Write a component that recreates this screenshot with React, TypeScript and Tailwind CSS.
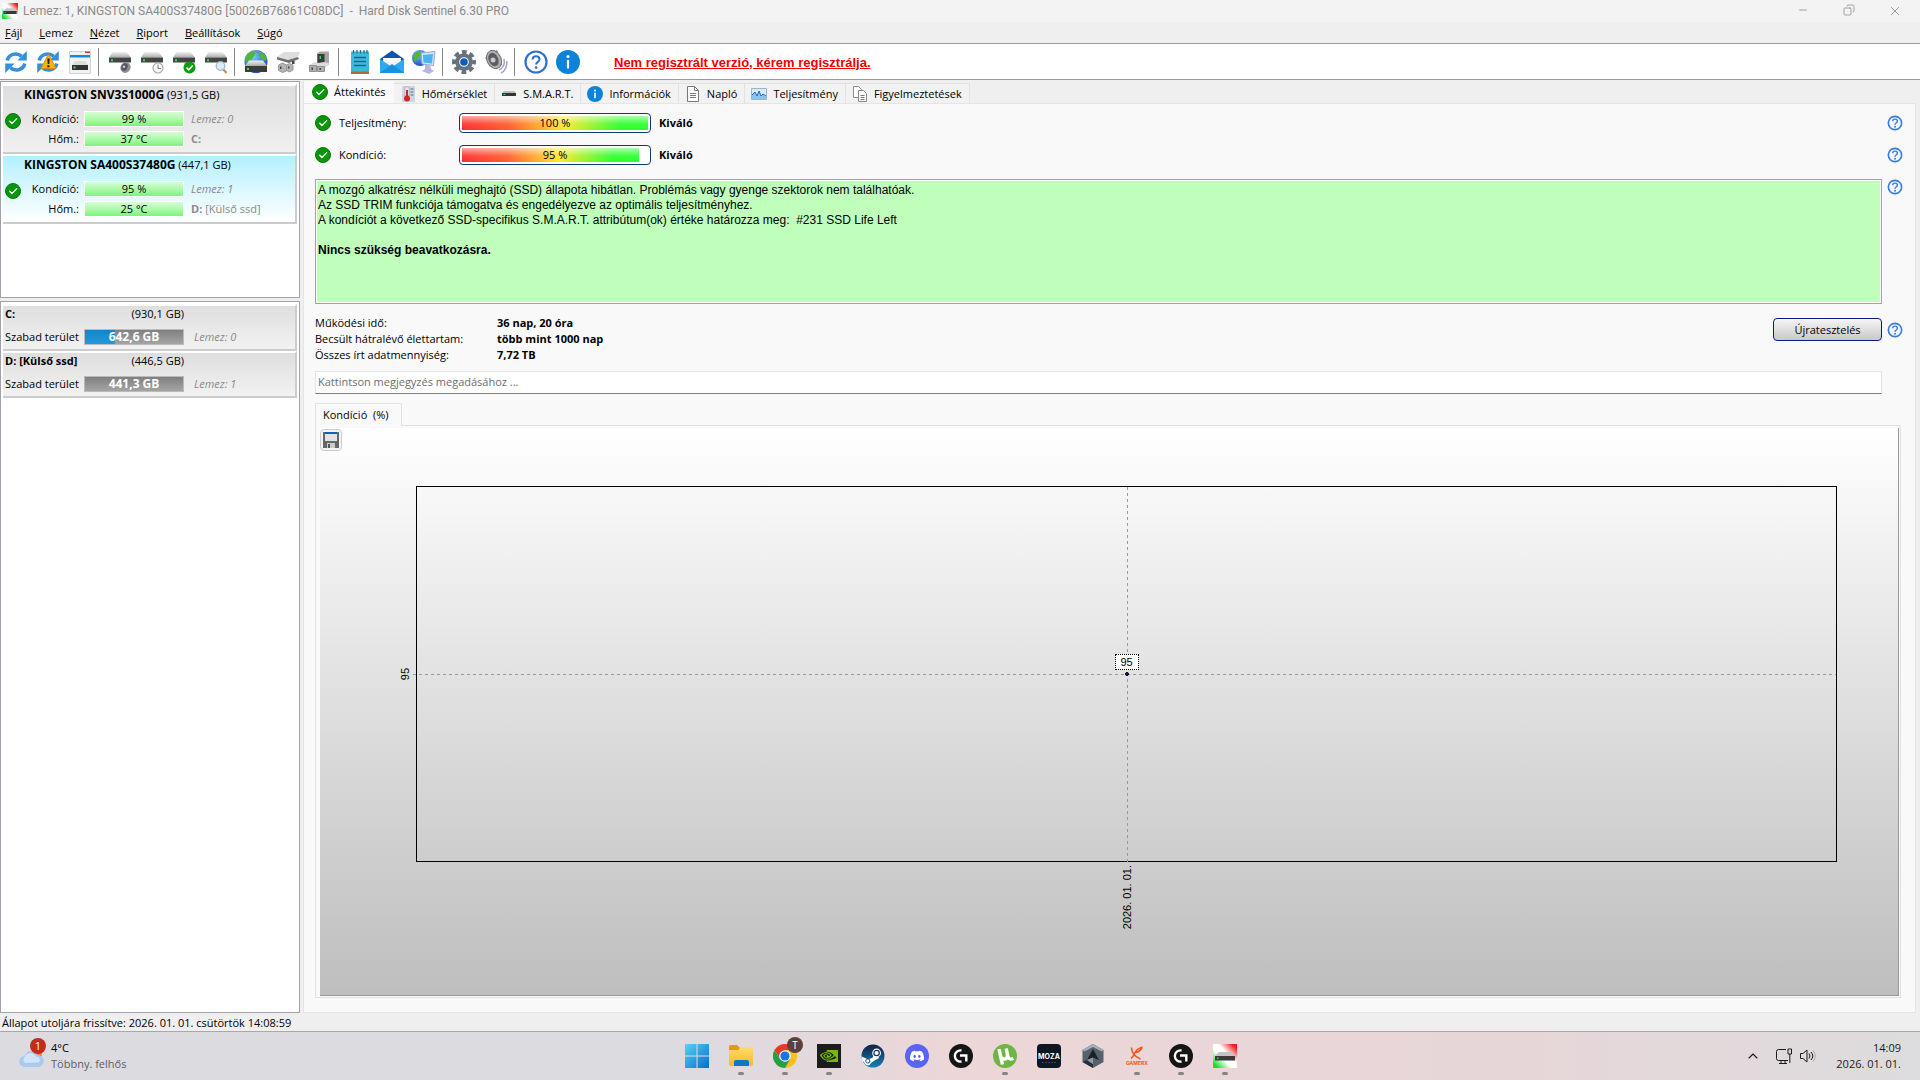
import type { ReactNode } from "react";
import { Check, ChevronUp, Copy, Minus, X } from "lucide-react";
import { SiDiscord, SiNvidia } from "react-icons/si";

type IconProps = { className?: string };

function OkIcon({ className = "size-4" }: IconProps) {
  return (
    <span className={`${className} shrink-0 rounded-full bg-[#0a960a] border border-[#077a07] flex items-center justify-center`}>
      <Check className="size-3/4 text-white" strokeWidth={3} />
    </span>
  );
}

function HelpIcon({ className = "size-4" }: IconProps) {
  return (
    <svg className={`${className} shrink-0`} viewBox="0 0 24 24" fill="none">
      <circle cx="12" cy="12" r="10" fill="#eef5fd" stroke="#3a7bd5" strokeWidth="2.4" />
      <path d="M8.6 9.400c0-4.400 6.900-4.200 6.900-.2 0 2.700-3.400 2.700-3.400 5.300" stroke="#3a7bd5" strokeWidth="2.1" />
      <circle cx="12.1" cy="17.600" r="1.400" fill="#3a7bd5" />
    </svg>
  );
}

function InfoIcon({ className = "size-4" }: IconProps) {
  return (
    <svg className={`${className} shrink-0`} viewBox="0 0 24 24">
      <circle cx="12" cy="12" r="12" fill="#0c82d8" />
      <circle cx="12" cy="6.600" r="1.500" fill="#fff" />
      <path d="M10.800 10h2.400v8.400h-2.400z" fill="#fff" />
    </svg>
  );
}

function Defs() {
  return (
    <svg width="0" height="0" className="absolute">
      <defs>
        <linearGradient id="metal" x1="0" y1="0" x2="0" y2="1">
          <stop offset="0" stopColor="#f2f2f2" />
          <stop offset="1" stopColor="#aaa" />
        </linearGradient>
        <linearGradient id="logo" x1="0" y1="1" x2="1" y2="0">
          <stop offset="0.1" stopColor="#12e02a" />
          <stop offset="0.4" stopColor="#fff" />
          <stop offset="0.6" stopColor="#fff" />
          <stop offset="0.9" stopColor="#f21c1c" />
        </linearGradient>
        <radialGradient id="globe" cx="0.4" cy="0.3" r="0.8">
          <stop offset="0" stopColor="#7fc4ff" />
          <stop offset="1" stopColor="#0b3fae" />
        </radialGradient>
        <linearGradient id="win" x1="0" y1="0" x2="1" y2="1">
          <stop offset="0" stopColor="#5ad0f8" />
          <stop offset="1" stopColor="#0270c8" />
        </linearGradient>
        <linearGradient id="steam" x1="0" y1="0" x2="0" y2="1">
          <stop offset="0" stopColor="#121f42" />
          <stop offset="1" stopColor="#1482b8" />
        </linearGradient>
        <linearGradient id="folder" x1="0" y1="0" x2="0" y2="1">
          <stop offset="0" stopColor="#ffdc6b" />
          <stop offset="1" stopColor="#f8b82a" />
        </linearGradient>
      </defs>
    </svg>
  );
}

function SentinelLogo({ className = "size-4" }: IconProps) {
  return (
    <svg className={className} viewBox="0 0 24 24">
      <path fill="url(#logo)" d="M0 0h24v24H0z" />
      <path fill="#c4c4c4" d="M6 8h12l4 4H2z" />
      <path fill="#3a3a3a" d="M2 12h20v4.500H2z" />
      <path fill="#24e04a" d="M4 13.500h1.500V15H4z" />
    </svg>
  );
}

function Refresh() {
  return (
    <g fill="none" stroke="#3390dc" strokeWidth="3.600">
      <path d="M3.200 10.500C4.600 4.500 12.500 1.600 17.600 6.400" />
      <path d="M20.800 13.500c-1.400 6-9.300 8.900-14.400 4.100" />
      <path fill="#3390dc" stroke="none" d="M22.800 1v9.600h-9.400zM1.200 23v-9.600h9.400z" />
    </g>
  );
}

function Drive() {
  return (
    <g>
      <path fill="url(#metal)" d="M4.500 2h14L23 7.500H1z" />
      <path fill="#444" d="M1 7.500h22v5H1z" />
      <path fill="#2ee04a" d="M3 9.200h2v2H3z" />
    </g>
  );
}

const toolbar: { label: string; art: ReactNode }[][] = [
  [
    { label: "Frissítés", art: <Refresh /> },
    {
      label: "Teljes frissítés",
      art: (
        <>
          <Refresh />
          <path fill="#fbb413" stroke="#e08d00" d="M12.500 4 20 18.500H5z" strokeLinejoin="round" />
          <path fill="#222" d="M11.300 8.500h2.400l-.4 5.500h-1.600zM11.300 15.200h2.200v2h-2.200z" />
        </>
      ),
    },
    {
      label: "Lemez panel",
      art: (
        <>
          <path fill="#f2f2f2" stroke="#d2d2d2" d="M1.500 1.500h21v22h-21z" />
          <path fill="#1a86e0" d="M2 5h20v2.500H2z" />
          <path fill="#e03a2a" d="M17 1.500h5v1.500h-5z" />
          <path fill="#ddd" d="M7 11h10l3 4H4z" />
          <path fill="#333" d="M4 15h16v5H4z" />
          <path fill="#2ee04a" d="M5.500 16.500h2v2h-2z" />
        </>
      ),
    },
  ],
  [
    {
      label: "Hangjelzés",
      art: (
        <>
          <Drive />
          <ellipse cx="17.500" cy="17.500" rx="5" ry="5.500" fill="#8c8c94" transform="rotate(25 17.500 17.500)" />
          <ellipse cx="16.500" cy="17" rx="3" ry="3.800" fill="#55555d" transform="rotate(25 16.500 17)" />
          <circle cx="16" cy="16.800" r="1.300" fill="#c8c8d0" />
        </>
      ),
    },
    {
      label: "Ütemezés",
      art: (
        <>
          <Drive />
          <circle cx="18" cy="18" r="5" fill="#fafafa" stroke="#aaa" strokeWidth="1.200" />
          <path d="M18 14.500V18.500h3" fill="none" stroke="#777" />
        </>
      ),
    },
    {
      label: "Teszt",
      art: (
        <>
          <Drive />
          <circle cx="17.500" cy="17.500" r="6" fill="#0d9c0d" />
          <path d="m14.500 17.500 2.200 2.300 4-4.300" fill="none" stroke="#fff" strokeWidth="1.600" />
        </>
      ),
    },
    {
      label: "Keresés",
      art: (
        <>
          <Drive />
          <path d="m19 19 3.500 4" stroke="#c08a5a" strokeWidth="2" />
          <circle cx="16.500" cy="16" r="4.300" fill="#d8ecfa" stroke="#9ab8d2" strokeWidth="1.200" />
        </>
      ),
    },
  ],
  [
    {
      label: "Hálózat",
      art: (
        <>
          <circle cx="12" cy="11.500" r="11.500" fill="url(#globe)" />
          <path fill="#4fb83a" d="M4 4c4-4 8-3 7 0s-2 3-4 6-5 2-6 0 1-4 3-6zM15 2c4 0 7 4 8 7-2 3-5 1-6-1s-4-3-2-6z" />
          <path fill="url(#metal)" d="M5 10.500h14l4 5.500H1z" />
          <path fill="#3c3c3c" d="M1 16h22v6H1z" />
          <path fill="#2ee04a" d="M3 18h2v2H3z" />
        </>
      ),
    },
    {
      label: "Kiadás",
      art: (
        <>
          <path fill="#dcdcdc" d="M8 2h16l-2 5-10 3L1 7z" />
          <path fill="#6f6f6f" d="m1 7 11 3 10-3 1 2-10 4L1 9.500z" />
          <path fill="#b4b4b4" stroke="#999" d="m2.500 15 4-2 4 2v6l-4 1.500-4-2zM10.500 15l3-1.500 3.500 1.500v5l-3.500 2-3-1.500z" />
          <path fill="#444" d="M4 16.500h1.500v2.500H4zM12 16.500h1.500v2H12zM16 11h2.500v3H16z" />
        </>
      ),
    },
    {
      label: "Csatlakoztatás",
      art: (
        <>
          <path fill="#a6a6a6" d="m9 3.500 3-2h9v13l-4 2H9z" />
          <path fill="#3a3a3a" d="M9.500 4h7v9h-7z" />
          <path fill="#2ee04a" d="M11.500 6H13v3h-1.500z" />
          <path fill="#dcdcdc" d="m1 15 6-3 3 1 6-1 6 1.500-5 4.500H1z" />
          <path fill="#b0b0b0" stroke="#8e8e8e" d="M1.500 15.500h7v6h-7zM9.500 16.500h7v5h-7z" />
          <path fill="#444" d="M3.500 17.500H5V20H3.500zM11.500 18H13v2h-1.500z" />
        </>
      ),
    },
  ],
  [
    {
      label: "Riport",
      art: (
        <>
          <path fill="#b8682a" d="M3 21h18v3H3z" />
          <path fill="#3db9dc" d="M3 1.500h18v20H3z" />
          <path d="M6 7.500h12M6 11.500h12M6 15.500h12" stroke="#146a8a" strokeWidth="1.400" />
          <path d="M5.500 0v3.500M9 0v3.500M12.500 0v3.500M16 0v3.500M19 0v3.500" stroke="#17708e" strokeWidth="1.200" />
        </>
      ),
    },
    {
      label: "E-mail",
      art: (
        <>
          <path fill="#0a58a6" d="M12 .5 24 9v14H0V9z" />
          <path fill="#f4f8fc" d="M3 8h18v8H3z" />
          <path fill="#2daaf0" d="m0 9 12 8 12-8v14H0z" />
          <path fill="#1990e0" d="m0 23 12-9 12 9z" />
        </>
      ),
    },
    {
      label: "Weboldal",
      art: (
        <>
          <circle cx="8" cy="8" r="8" fill="url(#globe)" />
          <path fill="#4fb83a" d="M3 3c4-3 7-1 6 2S5 8 4 11 0 8 3 3z" />
          <path fill="#d7e3f7" stroke="#93a8cf" d="m9 3 14-1.500-1.500 14L10 14z" />
          <path fill="#46b4ef" d="m11 5 10-1-1 9.500-8.500-1z" />
          <path fill="#b9b5e0" d="M13 15h5l1 4 3 2-5 3-7-3 3-2z" />
        </>
      ),
    },
  ],
  [
    {
      label: "Beállítások",
      art: (
        <>
          <circle cx="12" cy="12" r="9.800" fill="none" stroke="#66727c" strokeWidth="4.400" strokeDasharray="4.600 3.097" strokeDashoffset="2.300" />
          <circle cx="12" cy="12" r="6.800" fill="#fff" stroke="#66727c" strokeWidth="4" />
          <circle cx="12" cy="12" r="3.800" fill="#0a5fb4" />
        </>
      ),
    },
    {
      label: "Hangok",
      art: (
        <>
          <path fill="#77777c" d="M1 8 13 0l5 15-7 4z" />
          <ellipse cx="10" cy="9.500" rx="7" ry="9.500" fill="#b2b2b4" stroke="#6e6e72" transform="rotate(-25 10 9.500)" />
          <ellipse cx="9.500" cy="9.500" rx="4.800" ry="7" fill="#5c5c60" transform="rotate(-25 9.500 9.500)" />
          <circle cx="9" cy="10" r="2.500" fill="#c9c9cc" />
          <path d="M20 9c1 5-1 9-5 11M23 11c0 6-2 10-6 12" fill="none" stroke="#a4a0cc" strokeWidth="1.500" />
        </>
      ),
    },
  ],
  [
    {
      label: "Súgó",
      art: (
        <>
          <circle cx="12" cy="12" r="10.500" fill="#fff" stroke="#2f6fd0" strokeWidth="2.200" />
          <path d="M8.600 9.400c0-4.400 6.900-4.200 6.900-.2 0 2.700-3.400 2.700-3.400 5.300" fill="none" stroke="#2f6fd0" strokeWidth="2" />
          <circle cx="12.100" cy="17.600" r="1.400" fill="#2f6fd0" />
        </>
      ),
    },
    {
      label: "Névjegy",
      art: (
        <>
          <circle cx="12" cy="12" r="12" fill="#0c82d8" />
          <circle cx="12" cy="6.600" r="1.500" fill="#fff" />
          <path d="M10.900 10h2.200v8.500h-2.200z" fill="#fff" />
        </>
      ),
    },
  ],
];

const menu = ["Fájl", "Lemez", "Nézet", "Riport", "Beállítások", "Súgó"];

const disks = [
  { name: "KINGSTON SNV3S1000G", size: "(931,5 GB)", health: "99 %", temp: "37 °C", no: "Lemez: 0", letter: "C:", volume: "", active: false },
  { name: "KINGSTON SA400S37480G", size: "(447,1 GB)", health: "95 %", temp: "25 °C", no: "Lemez: 1", letter: "D:", volume: "[Külső ssd]", active: true },
];

const partitions = [
  { name: "C:", size: "(930,1 GB)", free: "642,6 GB", used: 31, no: "Lemez: 0" },
  { name: "D: [Külső ssd]", size: "(446,5 GB)", free: "441,3 GB", used: 0, no: "Lemez: 1" },
];

const tabs: { label: string; icon: ReactNode }[] = [
  {
    label: "Hőmérséklet",
    icon: (
      <svg className="size-4" viewBox="0 0 16 16">
        <path fill="#c9d6e4" d="M2 0h13v16H2z" />
        <path fill="#f6f6f6" stroke="#999" strokeWidth=".6" d="M5 1h4v9H5z" />
        <path fill="#d92020" d="M6 4h2v7H6z" />
        <circle cx="7" cy="12.500" r="3" fill="#d92020" />
        <path stroke="#667" d="M10.500 3h3M10.500 6h3M10.500 9h3" />
      </svg>
    ),
  },
  {
    label: "S.M.A.R.T.",
    icon: (
      <svg className="size-4" viewBox="0 0 16 16">
        <path fill="#bbb" d="M3 5h10l2 2H1z" />
        <path fill="#333" d="M1 7h14v3H1z" />
        <path fill="#2ee04a" d="M2.500 8h2v1h-2z" />
      </svg>
    ),
  },
  { label: "Információk", icon: <InfoIcon /> },
  {
    label: "Napló",
    icon: (
      <svg className="size-4" viewBox="0 0 16 16" fill="#fff" stroke="#777">
        <path d="M2.500.5h7l4 4v11h-11z" />
        <path d="M9.500.5v4h4M5 7.500h6M5 9.500h6M5 11.500h6" fill="none" />
      </svg>
    ),
  },
  {
    label: "Teljesítmény",
    icon: (
      <svg className="size-4" viewBox="0 0 16 16">
        <path fill="#d8ebf9" stroke="#9ab4c8" d="M.5 2.500h15v11H.5z" />
        <path fill="#8cc4f0" d="m1 9 3-3 2 4 2-5 2 5 2-2 3 2v3H1z" />
        <path fill="none" stroke="#1b6fc0" d="m1 9 3-3 2 4 2-5 2 5 2-2 3 2" />
      </svg>
    ),
  },
  {
    label: "Figyelmeztetések",
    icon: (
      <svg className="size-4" viewBox="0 0 16 16" fill="#fff" stroke="#8a8a8a">
        <path d="M1.500.5h5l3 3v8h-8z" />
        <path d="M6.500 4.500h5l3 3v8h-8z" />
        <path d="M8.500 9.500h4M8.500 11.500h4M8.500 13.500h4" stroke="#3f86cf" />
      </svg>
    ),
  },
];

const taskbar: { label: string; running?: boolean; art: ReactNode }[] = [
  {
    label: "Start",
    art: <path fill="url(#win)" d="M0 0h11.500v11.500H0zM12.500 0H24v11.500H12.500zM0 12.500h11.500V24H0zM12.500 12.500H24V24H12.500z" />,
  },
  {
    label: "Fájlkezelő",
    running: true,
    art: (
      <>
        <path fill="#e09a10" d="M0 3a2 2 0 0 1 2-2h6l3 3v4H0z" />
        <path fill="url(#folder)" d="M0 6h9l3-3h10a2 2 0 0 1 2 2v15a2 2 0 0 1-2 2H2a2 2 0 0 1-2-2z" />
        <path fill="#1574c4" d="M5 22v-4a2 2 0 0 1 2-2h11a2 2 0 0 1 2 2v4z" />
      </>
    ),
  },
  {
    label: "Chrome",
    running: true,
    art: (
      <>
        <circle cx="12" cy="12" r="12" fill="#fbc116" />
        <path fill="#e33b2e" d="M1.600 6A12 12 0 0 1 22.400 6H12L7 15z" />
        <path fill="#24a148" d="M1.600 6A12 12 0 0 0 12 24l5.200-9H6.800z" />
        <circle cx="12" cy="12" r="5.800" fill="#fff" />
        <circle cx="12" cy="12" r="4.600" fill="#1a73e8" />
      </>
    ),
  },
  { label: "NVIDIA", running: true, art: <><path fill="#1c1c1c" d="M0 0h24v24H0z" /><SiNvidia x="3" y="3" size={18} color="#76b900" /></> },
  {
    label: "Steam",
    art: (
      <>
        <circle cx="12" cy="12" r="11.500" fill="url(#steam)" />
        <path fill="#fff" d="m.6 12.500 6.400 2.700 4.300-1.200 2-4 5 4-4.800 2.500-3.500 2.500a3.500 3.500 0 0 1-6.600-.3L.8 16z" />
        <circle cx="15.600" cy="9" r="4.400" fill="#fff" />
        <circle cx="15.600" cy="9" r="2.700" fill="#fff" stroke="#17305c" strokeWidth="1.200" />
        <circle cx="6.800" cy="17" r="2.100" fill="none" stroke="#17507c" />
      </>
    ),
  },
  { label: "Discord", art: <><circle cx="12" cy="12" r="12" fill="#5865f2" /><SiDiscord x="5" y="5" size={14} color="#fff" /></> },
  { label: "G HUB", art: <GHub /> },
  {
    label: "µTorrent",
    running: true,
    art: (
      <>
        <circle cx="12" cy="12" r="12" fill="#6fb544" />
        <path d="m6 5 3.400 15.500M7.300 11c.8 5 7.200 6 7.200 0L13.200 4.500M14.500 11c.5 3.500 2.500 5 6 3.500" fill="none" stroke="#fff" strokeWidth="3.400" />
      </>
    ),
  },
  {
    label: "MOZA",
    art: (
      <>
        <rect width="24" height="24" rx="4" fill="#0d1724" />
        <text x="12" y="14.500" fill="#fff" fontSize="7" fontWeight="700" textAnchor="middle" fontFamily="Inter, sans-serif">MOZA</text>
        <path d="M5 18.500h14" stroke="#345" strokeDasharray="2 1" />
      </>
    ),
  },
  {
    label: "Armoury",
    art: (
      <>
        <path fill="#56616b" d="m12 0 10.500 6v12L12 24 1.500 18V6z" />
        <path fill="#a3adb5" d="m12 0 10.500 6-2 1.500L12 3 3.500 7.500 1.500 6z" />
        <path fill="#27303a" d="m1.500 18 4-2 6.500 4v4z" />
        <path fill="#1a2028" d="m12 5 6 11-6-2.500L6 16z" />
        <path fill="#8f9aa3" d="m6 16 6-2.500V20z" />
      </>
    ),
  },
  {
    label: "Gamerx",
    running: true,
    art: (
      <>
        <path d="M6.500 3.500c0 5 3 9 9 11.500M17.500 3c-5 1.500-7 4-8 6.500s-2 4-3.500 5M10 8.500c3 0 5-1.500 7-4.500" fill="none" stroke="#f0591e" strokeWidth="1.600" />
        <text x="12" y="21" fill="#f0591e" fontSize="5" fontWeight="700" textAnchor="middle" fontFamily="Inter, sans-serif">GAMERX</text>
      </>
    ),
  },
  { label: "G HUB 2", running: true, art: <GHub /> },
  { label: "Hard Disk Sentinel", running: true, art: <SentinelLogo className="" /> },
];

function GHub() {
  return (
    <>
      <circle cx="12" cy="12" r="12" fill="#151515" />
      <path d="M12.500 6.500A5.600 5.600 0 1 0 12.500 17.500M11 11.500h6.300v6" fill="none" stroke="#fff" strokeWidth="2.400" />
    </>
  );
}

function GreenBar({ text }: { text: string }) {
  return (
    <div className="h-4 w-25 border border-white bg-linear-to-b from-[#d8fdd6] to-[#7cf47c] flex items-center justify-center">
      {text}
    </div>
  );
}

function Meter({ label, value }: { label: string; value: number }) {
  return (
    <div className="flex items-center h-8">
      <OkIcon />
      <span className="ml-2 w-30">{label}</span>
      <div className="relative w-48 h-5 rounded-sm border border-[#0b3a75] bg-white p-0.5">
        <div
          className="h-full bg-[linear-gradient(to_bottom,rgba(255,255,255,.6),rgba(255,255,255,.1)_55%,rgba(255,255,255,0)),linear-gradient(to_right,#ff2a2a,#ff5a2a_25%,#ffe82a_55%,#2aff2a_85%)]"
          style={{ width: `${value}%` }}
        />
        <span className="absolute inset-0 flex items-center justify-center">{value} %</span>
      </div>
      <b className="ml-2">Kiváló</b>
      <button className="ml-auto mr-1.5" aria-label={`${label} súgó`}>
        <HelpIcon />
      </button>
    </div>
  );
}

function Chart() {
  return (
    <div className="flex-1 ml-1 mr-px mt-0.5 mb-px relative flex border-r border-b border-[#999] bg-linear-to-b from-white to-[#bebebe] pt-[58px] pb-[133px] pl-24 pr-[61px]">
      <button
        className="absolute left-0 top-px size-5.5 rounded-sm border border-[#ccc] bg-[#f4f4f4] flex items-center justify-center"
        aria-label="Mentés"
      >
        <svg className="size-4" viewBox="0 0 16 16">
          <path fill="#666" d="M0 0h16v16H0z" />
          <path fill="#0a64b8" d="M2 0h12v2H2z" />
          <path fill="#e2e2e2" d="M2 2h12v7H2z" />
          <path fill="#ccc" d="M4 11h8v5H4z" />
          <path fill="#555" d="M5 12h2v4H5z" />
        </svg>
      </button>
      <div className="flex-1 relative border border-black font-['Liberation_Sans',sans-serif]">
        <div className="absolute top-0 -bottom-1 left-1/2 w-px bg-[repeating-linear-gradient(to_bottom,#999_0_3px,transparent_3px_6px)]" />
        <div className="absolute -left-1 right-0 top-1/2 h-px bg-[repeating-linear-gradient(to_right,#999_0_3px,transparent_3px_6px)]" />
        <div className="absolute left-1/2 top-1/2 size-1 -translate-1/2 rounded-full border border-black bg-[#00f]" />
        <span className="absolute left-1/2 top-1/2 -translate-x-1/2 -mt-5 w-6 h-4 border border-dotted border-black bg-white text-center leading-[14px]">
          95
        </span>
        <span className="absolute right-full top-1/2 -translate-y-1/2 mr-1 [writing-mode:vertical-rl] rotate-180 leading-4">95</span>
        <span className="absolute left-1/2 top-full -translate-x-1/2 mt-1 [writing-mode:vertical-rl] rotate-180 leading-4 whitespace-nowrap">
          2026. 01. 01.
        </span>
      </div>
    </div>
  );
}

export default function App() {
  return (
    <div className="h-screen flex flex-col bg-[#efefef] text-black text-[11px] leading-4 font-['Open_Sans',sans-serif] overflow-hidden whitespace-nowrap">
      <Defs />
      <header className="h-5.5 shrink-0 flex items-center bg-[#f3f3f3] pl-0.5 pr-0.5 text-[#8a8a8a]">
        <SentinelLogo />
        <h1 className="ml-[5px] text-[12px] font-['Roboto',sans-serif]">
          Lemez: 1, KINGSTON SA400S37480G [50026B76861C08DC] &nbsp;-&nbsp; Hard Disk Sentinel 6.30 PRO
        </h1>
        <div className="ml-auto flex">
          <button className="w-11.5 flex justify-center" aria-label="Kis méret"><Minus className="size-3" strokeWidth={1.5} /></button>
          <button className="w-11.5 flex justify-center" aria-label="Előző méret"><Copy className="size-3 -scale-x-100" strokeWidth={1.5} /></button>
          <button className="w-11.5 flex justify-center" aria-label="Bezárás"><X className="size-3.5" strokeWidth={1.5} /></button>
        </div>
      </header>

      <nav className="h-5.5 shrink-0 flex items-center gap-[17px] pl-[5px] border-b border-[#9a9a9a]">
        {menu.map((m) => (
          <button key={m}>
            <u>{m[0]}</u>
            {m.slice(1)}
          </button>
        ))}
      </nav>

      <div className="h-9 shrink-0 flex items-center bg-white border-b border-[#9a9a9a]">
        {toolbar.map((group, g) => (
          <div key={g} className="flex items-center">
            {g > 0 && <div className="w-2 pl-0.5"><div className="h-7 border-l border-[#888]" /></div>}
            {group.map((item) => (
              <button key={item.label} aria-label={item.label} className="w-8 flex justify-center">
                <svg className="size-6" viewBox="0 0 24 24">{item.art}</svg>
              </button>
            ))}
          </div>
        ))}
        <a href="#" className="ml-[30px] mt-0.5 text-[13px] font-bold text-[#f00000] underline font-['Liberation_Sans',sans-serif]">
          Nem regisztrált verzió, kérem regisztrálja.
        </a>
      </div>

      <main className="flex-1 min-h-0 flex">
        <aside className="w-75 shrink-0 flex flex-col gap-[3px] pt-px">
          <div className="h-[217px] border border-[#a2a2aa] bg-white p-0.5">
            {disks.map((d) => (
              <section
                key={d.name}
                className={`h-[70px] flex border-t-2 border-r-2 border-b-2 border-t-white border-r-[#ccc] border-b-[#ccc] bg-linear-to-b ${
                  d.active ? "from-[#b2f0ff] to-white" : "from-[#dedede] to-[#f0f0f0]"
                }`}
              >
                <OkIcon className="size-4 mt-[27px] ml-0.5" />
                <div className="flex-1 pt-px">
                  <h2 className="h-[22px] pl-[3px]">
                    <b className="text-[12px]">{d.name}</b> {d.size}
                  </h2>
                  <dl className="grid grid-cols-[58px_100px_1fr] gap-x-[5px] leading-5">
                    <dt className="text-right">Kondíció:</dt>
                    <dd className="flex items-center"><GreenBar text={d.health} /></dd>
                    <dd className="pl-0.5 text-[#8a8a8a] italic">{d.no}</dd>
                    <dt className="text-right">Hőm.:</dt>
                    <dd className="flex items-center"><GreenBar text={d.temp} /></dd>
                    <dd className="pl-0.5 text-[#8a8a8a]"><b>{d.letter}</b> {d.volume}</dd>
                  </dl>
                </div>
              </section>
            ))}
          </div>

          <div className="flex-1 border border-[#a2a2aa] bg-white p-0.5">
            {partitions.map((p) => (
              <section
                key={p.name}
                className="h-[47px] pl-0.5 border-t-2 border-r-2 border-b-2 border-t-white border-r-[#ccc] border-b-[#ccc] bg-linear-to-b from-[#dedede] to-[#f2f2f2]"
              >
                <div className="h-[23px] w-[179px] flex justify-between">
                  <b>{p.name}</b>
                  <span>{p.size}</span>
                </div>
                <div className="flex items-center">
                  <span className="w-[79px]">Szabad terület</span>
                  <div className="relative w-25 h-4 border border-[#bbb] bg-linear-to-b from-[#808080] to-[#a4a4a4]">
                    <div className="h-full bg-linear-to-b from-[#1285c8] to-[#2499dc]" style={{ width: `${p.used}%` }} />
                    <b className="absolute inset-0 flex items-center justify-center text-white text-[12px]">{p.free}</b>
                  </div>
                  <i className="ml-2.5 text-[#8a8a8a]">{p.no}</i>
                </div>
              </section>
            ))}
          </div>
        </aside>

        <div className="flex-1 min-w-0 flex flex-col pl-[3px] pr-1 pt-px">
          <div role="tablist" className="flex items-end h-5.5">
            <button role="tab" aria-selected="true" className="h-5.5 flex items-center gap-1.5 px-2 bg-[#f9f9f9] border-l border-[#e5e5e5]">
              <OkIcon />
              Áttekintés
            </button>
            {tabs.map((t) => (
              <button key={t.label} role="tab" aria-selected="false" className="h-5 flex items-center gap-1.5 pl-1.5 pr-[7px] bg-[#f2f2f2] border-t border-r border-[#e2e2e2]">
                {t.icon}
                {t.label}
              </button>
            ))}
          </div>

          <div className="flex-1 min-h-0 flex flex-col bg-[#f9f9f9] border border-[#e5e5e5] pl-[11px] pr-1.5 pt-[3px] pb-3.5">
            <Meter label="Teljesítmény:" value={100} />
            <Meter label="Kondíció:" value={95} />

            <div className="mt-2 flex items-start">
              <div className="flex-1 h-[125px] border border-[#a2a2aa] bg-[#bfffbb] outline-1 -outline-offset-2 outline-white px-0.5 pt-[3px] font-['Liberation_Sans',sans-serif] text-[12px] leading-[15px]">
                <p>A mozgó alkatrész nélküli meghajtó (SSD) állapota hibátlan. Problémás vagy gyenge szektorok nem találhatóak.</p>
                <p>Az SSD TRIM funkciója támogatva és engedélyezve az optimális teljesítményhez.</p>
                <p>A kondíciót a következő SSD-specifikus S.M.A.R.T. attribútum(ok) értéke határozza meg: &nbsp;#231 SSD Life Left</p>
                <p className="mt-[15px] font-bold">Nincs szükség beavatkozásra.</p>
              </div>
              <button className="ml-[5px] mr-1.5" aria-label="Állapot súgó"><HelpIcon /></button>
            </div>

            <div className="mt-[11px] flex items-start">
              <dl className="flex-1 grid grid-cols-[182px_1fr]">
                <dt>Működési idő:</dt>
                <dd className="font-bold">36 nap, 20 óra</dd>
                <dt>Becsült hátralévő élettartam:</dt>
                <dd className="font-bold">több mint 1000 nap</dd>
                <dt>Összes írt adatmennyiség:</dt>
                <dd className="font-bold">7,72 TB</dd>
              </dl>
              <div className="mt-[3px] mr-1.5 flex items-center gap-[5px]">
                <button className="w-[109px] h-[23px] rounded-sm border border-[#0a1a8a] bg-linear-to-b from-[#f6f6f6] to-[#c8c8c8]">
                  Újratesztelés
                </button>
                <button aria-label="Teszt súgó"><HelpIcon /></button>
              </div>
            </div>

            <input
              aria-label="Megjegyzés"
              placeholder="Kattintson megjegyzés megadásához ..."
              className="mt-2 h-[23px] shrink-0 mr-[27px] px-0.5 pb-0.5 bg-white border border-[#e5e5e5] border-b-[#808080] placeholder:text-[#6d6d6d]"
            />

            <div className="mt-[9px] flex shrink-0">
              <button className="h-[23px] w-[87px] pl-[7px] pb-px text-left border border-b-0 border-[#e2e2e2]">Kondíció &nbsp;(%)</button>
              <div className="flex-1 mr-2 border-b border-[#e2e2e2]" />
            </div>
            <div className="flex-1 mr-2 flex flex-col border border-t-0 border-[#e2e2e2]">
              <Chart />
            </div>
          </div>
        </div>
      </main>

      <div className="h-[19px] shrink-0 flex items-center pl-0.5 pt-0.5 border-b border-[#a8a8a8]">
        Állapot utoljára frissítve: 2026. 01. 01. csütörtök 14:08:59
      </div>

      <footer className="h-12 shrink-0 grid grid-cols-[1fr_auto_1fr] items-center bg-[linear-gradient(to_right,#dcdce0,#dcdbe0_35%,#ecd6d8_50%,#e6d6d8_80%,#dddcde)]">
        <button className="flex items-center text-left pl-[18px]">
          <span className="relative">
            <svg className="w-7 h-7" viewBox="0 0 28 28">
              <circle cx="19" cy="13" r="5" fill="#f08a28" />
              <path fill="#a9c8f2" d="M7 25a5.500 5.500 0 0 1-.5-11 7 7 0 0 1 13-1A6 6 0 0 1 20 25z" />
              <path fill="#d3e4fa" d="M7 21a4 4 0 0 1 0-6.500 6 6 0 0 1 11 0c3 0 5 3 3 6z" />
            </svg>
            <span className="absolute -top-1 left-3 size-4 rounded-full bg-[#c42b1c] text-white text-center">1</span>
          </span>
          <span className="ml-[5px]">
            4°C
            <span className="block text-[#5c5c60]">Többny. felhős</span>
          </span>
        </button>
        <div className="flex pl-0.5">
          {taskbar.map((t) => (
            <button key={t.label} aria-label={t.label} className="relative w-11 h-12 flex items-center justify-center">
              <svg className="size-6" viewBox="0 0 24 24">{t.art}</svg>
              {t.label === "Chrome" && (
                <span className="absolute top-[5px] right-1 size-4 rounded-full bg-[#5d4037] text-white text-[10px]">T</span>
              )}
              {t.running && <span className="absolute bottom-[5px] w-1.5 h-[3px] rounded-full bg-[#858388]" />}
            </button>
          ))}
        </div>
        <div className="flex items-center justify-end pr-[19px] text-[#1a1a1a]">
          <ChevronUp className="size-4" strokeWidth={1.600} />
          <svg className="ml-[15px] size-4" viewBox="0 0 16 16" fill="none" stroke="currentColor">
            <path d="M10 1.500H2.500a2 2 0 0 0-2 2v7a2 2 0 0 0 2 2h9.500M5 12.500v3M9 12.500v3M3 15.500h8M12 1h3.500v5H12zM13.800 6v9" />
          </svg>
          <svg className="ml-2 size-4" viewBox="0 0 16 16" fill="none" stroke="currentColor">
            <path d="M.5 5.500H3l4-3.500v12L3 10.500H.5zM9 5.500q2 2.500 0 5M11 4q3.500 4 0 8" />
            <path d="M13 2.500q4.500 5.500 0 11" stroke="#aaa" />
          </svg>
          <time className="ml-5 text-right">
            14:09
            <br />
            2026. 01. 01.
          </time>
        </div>
      </footer>
    </div>
  );
}
